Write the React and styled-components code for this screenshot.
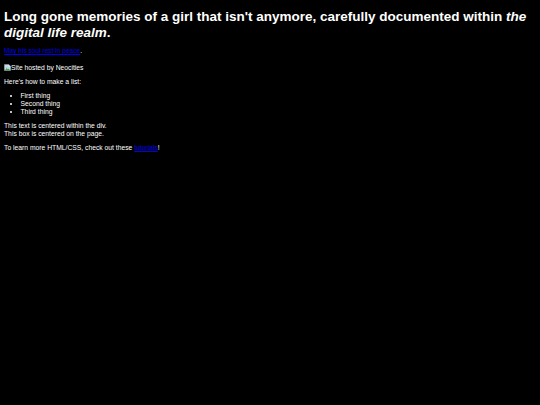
import React from "react";
import styled, { createGlobalStyle } from "styled-components";

const Global = createGlobalStyle`
  html, body {
    margin: 0;
    background: #000;
  }
  body {
    padding: 4px;
    color: #fff;
    font-family: "Liberation Sans", Arial, sans-serif;
    font-size: 6.75px;
    line-height: 8px;
  }
`;

const Page = styled.div`
  display: flex;
  flex-direction: column;
`;

const Title = styled.h1`
  font-size: 13.5px;
  line-height: 15.5px;
  font-weight: bold;
  margin: 5.25px 0 7px;

  em {
    font-style: italic;
  }
`;

const Small = styled.p`
  margin: 0 0 9.5px;
  font-size: 6.6px;
  line-height: 7px;
`;

const Para = styled.p`
  margin: 0 0 6px;
`;

const Link = styled.a`
  color: #0000ee;
  text-decoration: underline;
`;

const Hosted = styled.div`
  display: flex;
  align-items: center;
  margin-bottom: 6px;
`;

const List = styled.ul`
  margin: 0 0 6px;
  padding-left: 16.5px;
  list-style: disc;
`;

function BrokenImage() {
  return (
    <svg width="7" height="7" viewBox="0 0 16 16">
      <path d="M1 1h10l4 4v10H1z" fill="#e8e8e8" stroke="#9a9a9a" strokeWidth="1" />
      <path d="M2 3h8v3h4v4H2z" fill="#b8d4ec" />
      <path d="M2 14l4-5 3 3 2-2 3 4z" fill="#3e9e4a" />
    </svg>
  );
}

export default function App() {
  return (
    <>
      <Global />
      <Page>
        <Title>
          Long gone memories of a girl that isn't anymore, carefully documented
          within <em>the digital life realm</em>.
        </Title>
        <Small>
          <Link href="#">May his soul rest in peace</Link>.
        </Small>
        <Hosted>
          <BrokenImage />
          <span>Site hosted by Neocities</span>
        </Hosted>
        <Para>Here's how to make a list:</Para>
        <List>
          <li>First thing</li>
          <li>Second thing</li>
          <li>Third thing</li>
        </List>
        <Para>
          This text is centered within the div.
          <br />
          This box is centered on the page.
        </Para>
        <Para>
          To learn more HTML/CSS, check out these <Link href="#">tutorials</Link>!
        </Para>
      </Page>
    </>
  );
}
